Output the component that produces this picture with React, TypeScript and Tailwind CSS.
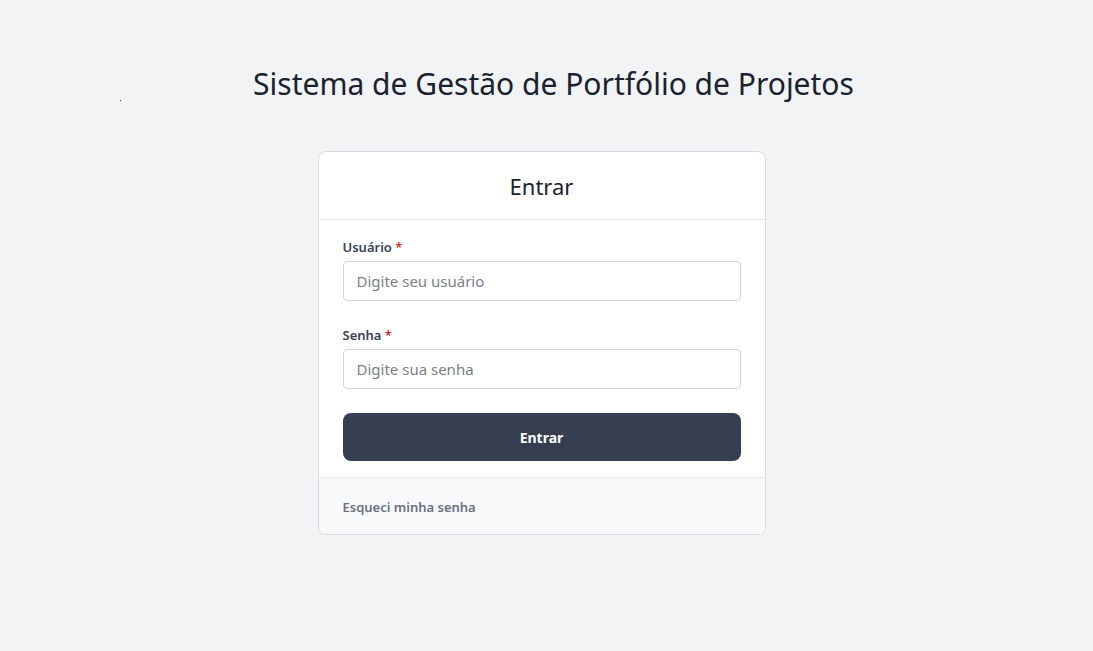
import React from "react";

export default function App() {
  return (
    <div
      className="relative min-h-[651px] w-full bg-[#f2f3f5] flex flex-col items-center"
      style={{ fontFamily: '"Noto Sans", "Open Sans", sans-serif' }}
    >
      <div className="absolute left-[120px] top-[100px] w-[1px] h-[1px] bg-[#333]" />
      <h1 className="mt-[61px] ml-[14px] text-[30px] leading-[46px] text-[#1a2230] font-normal">
        Sistema de Gestão de Portfólio de Projetos
      </h1>
      <div className="mt-[44px] mr-[10px] w-[448px] bg-white border border-[#d9dbdf] rounded-[8px] overflow-hidden">
        <div className="h-[68px] pt-[2px] flex items-center justify-center border-b border-[#e5e7eb]">
          <h2 className="text-[22px] text-[#1a2230]">Entrar</h2>
        </div>
        <div className="px-[24px] pt-[17px] pb-[16px]">
          <label className="block text-[13px] font-semibold text-[#374151] leading-[20px] mb-[4px]">
            Usuário <span className="text-[#dc2626]">*</span>
          </label>
          <input
            placeholder="Digite seu usuário"
            className="w-full h-[40px] border border-[#d1d5db] rounded-[4px] px-[13px] text-[15px] text-[#374151] placeholder:text-[#7b7f87] outline-none"
          />
          <label className="block mt-[24px] text-[13px] font-semibold text-[#374151] leading-[20px] mb-[4px]">
            Senha <span className="text-[#dc2626]">*</span>
          </label>
          <input
            type="password"
            placeholder="Digite sua senha"
            className="w-full h-[40px] border border-[#d1d5db] rounded-[4px] px-[13px] text-[15px] text-[#374151] placeholder:text-[#7b7f87] outline-none"
          />
          <button className="mt-[24px] w-full h-[48px] rounded-[8px] bg-[#353f51] text-white text-[14px] font-bold">
            Entrar
          </button>
        </div>
        <div className="h-[57px] pt-[4px] bg-[#f8f9fa] border-t border-[#e5e7eb] flex items-center px-[24px]">
          <span className="text-[13px] font-semibold text-[#6b7280]">Esqueci minha senha</span>
        </div>
      </div>
    </div>
  );
}
